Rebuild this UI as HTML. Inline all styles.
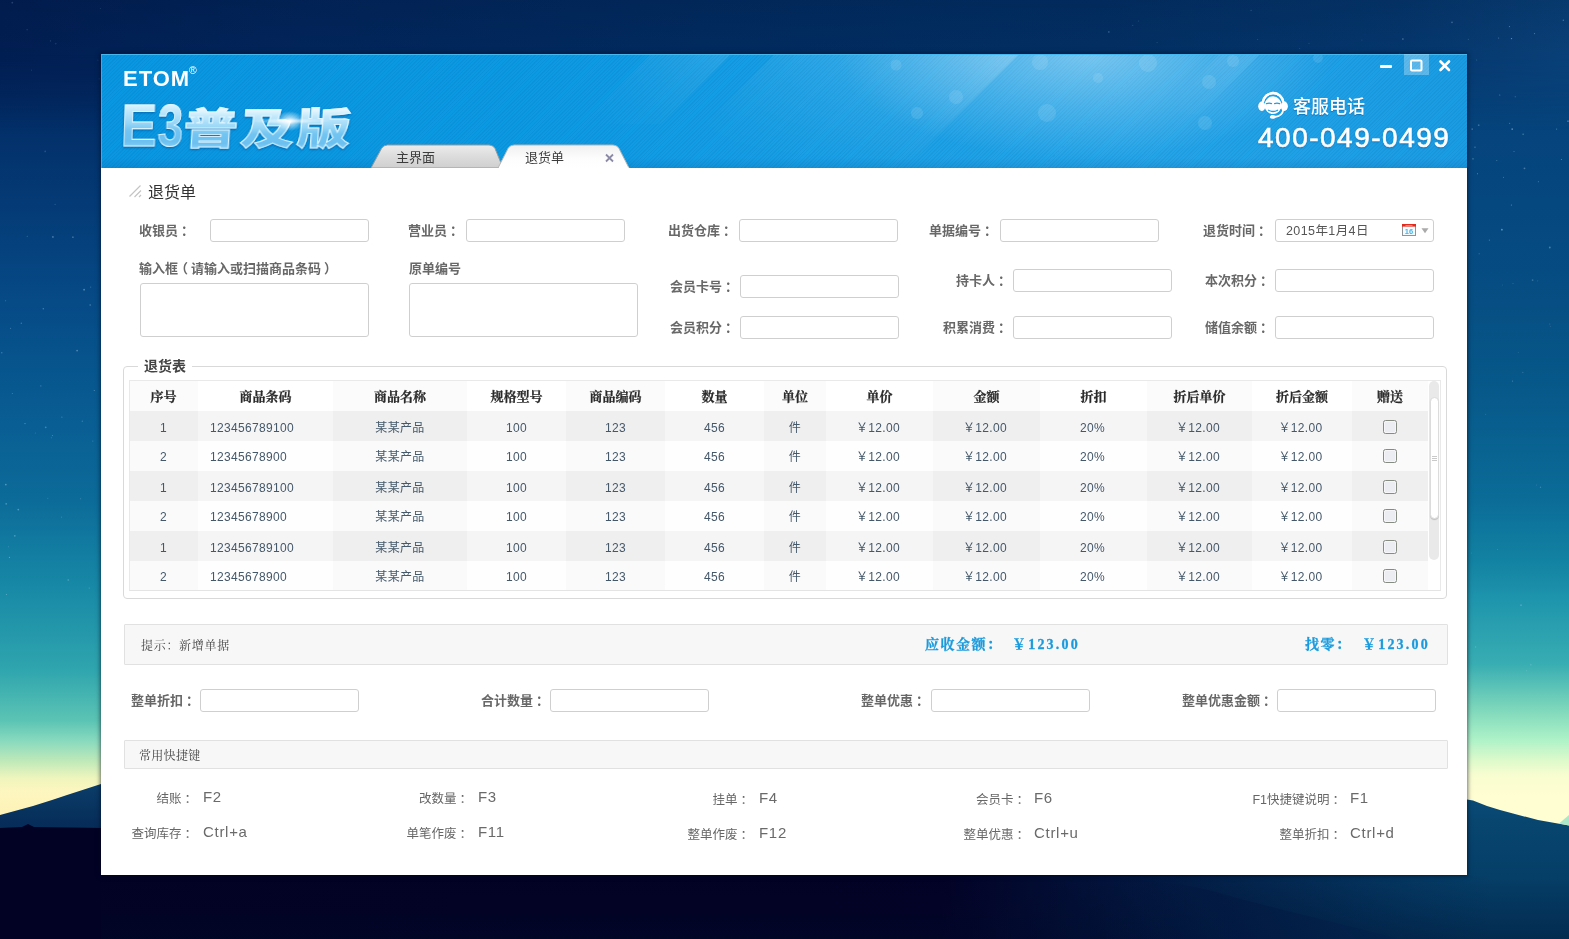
<!DOCTYPE html>
<html lang="zh-CN">
<head>
<meta charset="utf-8">
<title>E3普及版 - 退货单</title>
<style>
*{box-sizing:border-box;margin:0;padding:0}
html,body{width:1569px;height:939px;overflow:hidden}
body{position:relative;font-family:"Liberation Sans","Noto Sans CJK SC",sans-serif;font-size:12.5px;color:#555;
background:#02245a}
.abs{position:absolute}
/* desktop wallpaper */
#bg{position:absolute;left:0;top:0;width:1569px;height:939px;
background:
 linear-gradient(180deg,#011f58 0px,#02275f 70px,#043a75 200px,#064a86 300px,#085a91 400px,#0c6b99 500px,#1788a6 585px,#2fa5ae 670px,#5cc4b4 721px,#86d9be 740px,#b9e8b9 759px,#eef5bd 778px,#fdf6bf 791px,#fdf3b9 810px,#fdf3b9 939px);}
#bgr{position:absolute;left:1200px;top:0;width:369px;height:939px;
-webkit-mask-image:linear-gradient(90deg,rgba(0,0,0,0) 0,rgba(0,0,0,1) 267px);mask-image:linear-gradient(90deg,rgba(0,0,0,0) 0,rgba(0,0,0,1) 267px);
background:linear-gradient(180deg,#094077 0px,#06417a 80px,#05477f 200px,#064e83 300px,#075a8b 400px,#0b6c98 500px,#1282a2 560px,#1f95ad 600px,#38adb2 664px,#7fd8bb 710px,#aef2c8 740px,#dcfacb 760px,#f8fdd0 775px,#fffdd2 795px,#fffdd2 939px);}
#bgt{position:absolute;left:0;top:0;width:1569px;height:130px;-webkit-mask-image:linear-gradient(180deg,#000 0,#000 54px,rgba(0,0,0,0) 130px);mask-image:linear-gradient(180deg,#000 0,#000 54px,rgba(0,0,0,0) 130px);
background:linear-gradient(180deg,rgba(1,10,40,.12) 0,rgba(1,10,40,0) 54px),linear-gradient(90deg,#011e52 0,#01255a 300px,#012b5f 700px,#022f63 1100px,#04366c 1400px,#094077 1569px)}
#bgsvg{position:absolute;left:0;top:0}
/* window */
#win{position:absolute;left:101px;top:54px;width:1366px;height:821px;background:#fff;box-shadow:0 0 4px 1px rgba(0,10,30,.55)}
#hdr{position:absolute;left:0;top:0;width:1366px;height:114px;overflow:hidden;
background:
 linear-gradient(180deg,rgba(0,60,120,0) 0,rgba(0,60,120,0) 104px,rgba(0,60,120,.12) 114px),
 linear-gradient(90deg,#0997e1 0%,#0b99e2 30%,#139de4 45%,#1ca1e6 60%,#24a5e8 75%,#1ea0e6 90%,#1a9ce3 100%);}
#hdr .stripes{position:absolute;left:0;top:0;width:100%;height:100%;
background:repeating-linear-gradient(135deg,rgba(0,50,110,.07) 0,rgba(0,50,110,.07) 1px,rgba(0,50,110,0) 1px,rgba(0,50,110,0) 2.500px)}
#hdr .edge{position:absolute;left:0;top:0;width:100%;height:100%;border-top:1px solid #46b8f0;border-left:1px solid #35acec}
.lbl{position:absolute;font-weight:bold;color:#686868;font-size:13px;line-height:16px;white-space:nowrap;margin-top:0}
.c{position:relative;left:3px}
.inp{position:absolute;border:1px solid #cfcfcf;border-radius:3px;background:#fff;height:23px;width:159px}

/* header content */
#glare{position:absolute;left:0;top:0;width:1366px;height:114px}
#etom{will-change:transform;position:absolute;left:22px;top:13px;font:bold 22px/24px "Liberation Sans",sans-serif;color:#fff;letter-spacing:1px;white-space:nowrap}
#reg{will-change:transform;position:absolute;left:88px;top:11px;font:10.500px/10px "Liberation Sans",sans-serif;color:#fff}
.logo{position:absolute;white-space:nowrap;font-family:"Liberation Sans","Noto Sans CJK SC",sans-serif;transform-origin:0 100%;
 background:linear-gradient(180deg,#e4f6fe 0%,#e4f6fe 12%,#c2e9fb 24%,#97d6f6 45%,#72c4f1 58%,#6cc0f0 76%,#8fd3f6 90%,#c9eefd 100%);-webkit-background-clip:text;background-clip:text;color:transparent;-webkit-text-stroke:1px rgba(226,246,255,.9);
 filter:drop-shadow(0 1px 1px rgba(0,70,140,.55))}
#logoA{left:19px;top:42px;font-weight:bold;font-size:60px;line-height:60px;height:60px;transform:scaleX(.9) skewX(-2deg);letter-spacing:0}
#logoC{left:56px;top:42px;font-weight:bold;font-size:60px;line-height:60px;height:60px;transform:scaleX(.76) skewX(-2deg)}
#logoB{left:80.5px;top:50px;font-weight:900;font-size:42.5px;line-height:52px;height:52px;transform:scaleX(1.27) skewX(-3deg);letter-spacing:2px}
#flare{position:absolute;left:149px;top:47px;width:80px;height:40px;background:radial-gradient(ellipse 14px 10px at 50% 50%,rgba(255,255,255,.95) 0,rgba(255,255,255,.55) 40%,rgba(255,255,255,0) 100%),radial-gradient(ellipse 40px 3px at 50% 50%,rgba(255,255,255,.7) 0,rgba(255,255,255,0) 100%)}
.tab{position:absolute;top:90px;height:24px}
.tabtxt{position:absolute;will-change:transform;top:96px;font-size:13px;line-height:16px;color:#3c3c3c;white-space:nowrap}
#svc{will-change:transform;position:absolute;left:1192px;top:42px;font-size:18px;font-weight:500;line-height:22px;color:#fff;white-space:nowrap;text-shadow:0 1px 1px rgba(0,70,140,.45)}
#tel{will-change:transform;position:absolute;left:1157px;top:67px;font-size:28px;line-height:34px;color:#fff;white-space:nowrap;letter-spacing:1.5px;text-shadow:0 1px 2px rgba(0,60,130,.5);-webkit-text-stroke:.6px #fff}

/* content: coordinates relative to #win (page x-101, y-54) */
#content{position:absolute;left:0;top:0;width:1366px;height:821px;will-change:transform}
#ttl{position:absolute;left:47px;top:129px;font-size:16px;line-height:20px;color:#333;white-space:nowrap}
.lbl.r{text-align:right}
.ta{position:absolute;border:1px solid #cfcfcf;border-radius:3px;background:#fff;width:229px;height:54px}
#fs{position:absolute;left:22px;top:312px;width:1324px;height:233px;border:1px solid #d9d9d9;border-radius:4px}
#fsl{position:absolute;left:37px;top:303px;padding:0 6px;background:#fff;font-size:14px;line-height:18px;font-weight:bold;color:#444;white-space:nowrap}

/* table */
#tb{position:absolute;left:28px;top:326px;width:1312px;height:211px;border:1px solid #e9e9e9;border-bottom-color:#e4e4e4;background:#fff;overflow:hidden}
.tr{position:absolute;left:0;width:1299px;height:30px}
.td{position:absolute;top:0;height:30px;text-align:center;font-size:12px;letter-spacing:.33px;line-height:30px;color:#44586a;white-space:nowrap}
.th{font-family:"Liberation Serif","Noto Serif CJK SC",serif;font-weight:bold;color:#2a2a2a;font-size:13px;letter-spacing:0;-webkit-text-stroke:.25px #2a2a2a}
.cb{position:absolute;width:14px;height:14px;border:1px solid #868c82;border-radius:2.500px;background:#ecedf2;box-shadow:inset 0 0 0 1px #f6f6f9}
#sbt{position:absolute;left:1299px;top:0;width:10px;height:179px;border-radius:5px;background:#e9e9e9}
#sbh{position:absolute;left:1299.500px;top:16px;width:9px;height:122px;border-radius:4.500px;background:#fff;border:1px solid #dcdcdc;box-shadow:0 1px 1px rgba(0,0,0,.18)}

/* bottom */
.bar{position:absolute;left:23px;width:1324px;background:#f7f7f7;border:1px solid #e1e1e1;border-radius:1px}
.sim{font-family:"Liberation Serif","Noto Serif CJK SC",serif}
#hint{position:absolute;left:40px;top:584px;font-size:12px;line-height:16px;color:#444;letter-spacing:.7px;white-space:nowrap}
.amt{position:absolute;top:582px;font-size:14px;line-height:18px;font-weight:bold;color:#1b9bdd;-webkit-text-stroke:.3px #1b9bdd;letter-spacing:1.5px;white-space:nowrap}
#ck{position:absolute;left:38px;top:694px;font-size:12px;line-height:16px;color:#444;letter-spacing:.3px;white-space:nowrap}
.sl{position:absolute;font-size:12.5px;line-height:16px;color:#666;white-space:nowrap;margin-top:2px}
.sk{position:absolute;font-size:15px;line-height:18px;color:#6a6a6a;letter-spacing:.7px;white-space:nowrap;margin-top:1px}
</style>
</head>
<body>
<div id="bg"></div><div id="bgr"></div><div id="bgt"></div>
<svg id="bgsvg" width="1569" height="939" viewBox="0 0 1569 939">
 <defs>
  <linearGradient id="mL" gradientUnits="userSpaceOnUse" x1="0" y1="784" x2="0" y2="830"><stop offset="0" stop-color="#0b3d69"/><stop offset="1" stop-color="#062b57"/></linearGradient>
  <linearGradient id="mR" gradientUnits="userSpaceOnUse" x1="0" y1="799" x2="0" y2="876"><stop offset="0" stop-color="#0a4b75"/><stop offset=".4" stop-color="#07446e"/><stop offset="1" stop-color="#053f68"/></linearGradient>
  <linearGradient id="bot2" gradientUnits="userSpaceOnUse" x1="0" y1="0" x2="1569" y2="0"><stop offset="0" stop-color="#020224"/><stop offset=".6" stop-color="#020226"/><stop offset=".7" stop-color="#02123a"/><stop offset=".8" stop-color="#03264f"/><stop offset=".9" stop-color="#043862"/><stop offset=".95" stop-color="#053f68"/><stop offset="1" stop-color="#053f68"/></linearGradient>
  <linearGradient id="botv" x1="0" y1="0" x2="0" y2="1"><stop offset="0" stop-color="#010a28" stop-opacity="0"/><stop offset="1" stop-color="#010a28" stop-opacity=".38"/></linearGradient>
  <linearGradient id="ridge" gradientUnits="userSpaceOnUse" x1="1100" y1="0" x2="1450" y2="0"><stop offset="0" stop-color="#02123a" stop-opacity="0"/><stop offset=".4" stop-color="#021a42" stop-opacity=".75"/><stop offset="1" stop-color="#032650" stop-opacity=".8"/></linearGradient>
 </defs>
 <g fill="#bfe6ff"><circle cx="1468.3" cy="39.2" r="0.5" opacity="0.27"/><circle cx="1499.8" cy="95.1" r="0.5" opacity="0.48"/><circle cx="1452.0" cy="22.3" r="0.9" opacity="0.27"/><circle cx="1433.5" cy="110.4" r="0.5" opacity="0.49"/><circle cx="1514.0" cy="151.6" r="0.5" opacity="0.39"/><circle cx="1479.1" cy="253.8" r="0.5" opacity="0.39"/><circle cx="1439.8" cy="109.0" r="0.5" opacity="0.39"/><circle cx="1503.5" cy="177.3" r="0.5" opacity="0.4"/><circle cx="1515.2" cy="96.8" r="0.5" opacity="0.39"/><circle cx="1512.2" cy="129.1" r="0.9" opacity="0.44"/><circle cx="1489.4" cy="240.1" r="0.7" opacity="0.32"/><circle cx="1538.4" cy="181.7" r="0.6" opacity="0.27"/><circle cx="1464.7" cy="128.7" r="0.7" opacity="0.43"/><circle cx="1462.9" cy="254.8" r="0.5" opacity="0.38"/><circle cx="1444.6" cy="88.9" r="0.9" opacity="0.36"/><circle cx="1563.3" cy="20.2" r="0.7" opacity="0.34"/><circle cx="1472.2" cy="129.1" r="0.9" opacity="0.27"/><circle cx="1433.9" cy="70.2" r="0.5" opacity="0.27"/><circle cx="1524.5" cy="168.3" r="0.9" opacity="0.32"/><circle cx="1477.5" cy="173.8" r="0.5" opacity="0.49"/><circle cx="1473.0" cy="158.8" r="0.9" opacity="0.26"/><circle cx="1534.5" cy="33.6" r="0.6" opacity="0.35"/><circle cx="1556.6" cy="129.1" r="0.6" opacity="0.36"/><circle cx="1501.9" cy="229.7" r="0.9" opacity="0.47"/><circle cx="1461.5" cy="108.0" r="0.7" opacity="0.42"/><circle cx="1476.7" cy="60.0" r="0.5" opacity="0.29"/><circle cx="1454.6" cy="60.7" r="0.9" opacity="0.46"/><circle cx="1447.2" cy="73.3" r="0.6" opacity="0.35"/><circle cx="1475.0" cy="147.2" r="0.6" opacity="0.42"/><circle cx="1496.8" cy="160.6" r="0.5" opacity="0.36"/><circle cx="1549.8" cy="247.5" r="0.9" opacity="0.35"/><circle cx="1478.7" cy="125.2" r="0.9" opacity="0.27"/><circle cx="1430.0" cy="54.3" r="0.6" opacity="0.28"/><circle cx="1509.5" cy="26.6" r="0.6" opacity="0.38"/><circle cx="1561.4" cy="159.6" r="0.5" opacity="0.47"/><circle cx="1511.5" cy="38.6" r="0.7" opacity="0.49"/><circle cx="1509.7" cy="123.3" r="0.5" opacity="0.46"/><circle cx="1568.0" cy="121.2" r="0.9" opacity="0.33"/><circle cx="1441.5" cy="194.9" r="0.7" opacity="0.37"/><circle cx="1523.1" cy="134.2" r="0.6" opacity="0.49"/><circle cx="1498.7" cy="38.1" r="0.5" opacity="0.44"/><circle cx="1464.4" cy="167.2" r="0.5" opacity="0.42"/><circle cx="1458.9" cy="95.3" r="0.6" opacity="0.34"/><circle cx="1453.2" cy="140.8" r="0.7" opacity="0.41"/><circle cx="1511.4" cy="205.0" r="0.6" opacity="0.45"/><circle cx="1361.9" cy="40.0" r="0.6" opacity="0.15"/><circle cx="1257.7" cy="39.5" r="0.5" opacity="0.22"/><circle cx="1251.1" cy="10.5" r="0.7" opacity="0.18"/><circle cx="1399.8" cy="53.4" r="0.7" opacity="0.14"/><circle cx="1132.7" cy="25.4" r="0.7" opacity="0.15"/><circle cx="1299.7" cy="48.6" r="0.5" opacity="0.18"/><circle cx="1309.0" cy="43.2" r="0.5" opacity="0.23"/><circle cx="1138.4" cy="21.0" r="0.6" opacity="0.18"/><circle cx="1157.1" cy="42.6" r="0.7" opacity="0.14"/><circle cx="1402.8" cy="39.0" r="0.9" opacity="0.18"/><circle cx="1403.0" cy="39.1" r="0.6" opacity="0.25"/><circle cx="1108.8" cy="31.9" r="0.9" opacity="0.23"/><circle cx="14.8" cy="535.8" r="0.9" opacity="0.33"/><circle cx="35.4" cy="433.0" r="0.6" opacity="0.2"/><circle cx="80.7" cy="498.8" r="0.5" opacity="0.31"/><circle cx="94.3" cy="390.5" r="0.6" opacity="0.37"/><circle cx="21.3" cy="323.2" r="0.7" opacity="0.3"/><circle cx="77.1" cy="350.6" r="0.9" opacity="0.37"/><circle cx="6.2" cy="503.8" r="0.9" opacity="0.33"/><circle cx="82.3" cy="421.2" r="0.6" opacity="0.31"/><circle cx="52.9" cy="236.9" r="0.9" opacity="0.36"/><circle cx="61.5" cy="517.1" r="0.6" opacity="0.23"/><circle cx="47.8" cy="498.3" r="0.5" opacity="0.27"/><circle cx="52.4" cy="435.5" r="0.5" opacity="0.38"/><circle cx="5.7" cy="300.8" r="0.5" opacity="0.35"/><circle cx="51.3" cy="437.8" r="0.5" opacity="0.29"/><circle cx="61.9" cy="417.1" r="0.6" opacity="0.34"/><circle cx="45.7" cy="427.3" r="0.9" opacity="0.3"/><circle cx="25.0" cy="423.6" r="0.7" opacity="0.38"/><circle cx="90.2" cy="305.0" r="0.9" opacity="0.23"/><circle cx="12.3" cy="393.6" r="0.5" opacity="0.33"/><circle cx="43.3" cy="308.7" r="0.7" opacity="0.36"/><circle cx="90.6" cy="287.1" r="0.7" opacity="0.23"/><circle cx="89.2" cy="588.0" r="0.6" opacity="0.35"/><circle cx="9.5" cy="557.4" r="0.6" opacity="0.4"/><circle cx="84.1" cy="289.7" r="0.9" opacity="0.4"/><circle cx="40.8" cy="385.9" r="0.7" opacity="0.26"/><circle cx="72.9" cy="237.2" r="0.9" opacity="0.29"/><circle cx="1.8" cy="352.7" r="0.7" opacity="0.3"/><circle cx="6.5" cy="594.5" r="0.6" opacity="0.39"/><circle cx="10.6" cy="328.3" r="0.5" opacity="0.38"/><circle cx="18.3" cy="509.6" r="0.9" opacity="0.37"/><circle cx="68.3" cy="580.0" r="0.9" opacity="0.23"/><circle cx="92.8" cy="441.1" r="0.7" opacity="0.22"/><circle cx="5.8" cy="484.6" r="0.9" opacity="0.38"/><circle cx="27.2" cy="236.2" r="0.5" opacity="0.36"/><circle cx="8.5" cy="546.8" r="0.5" opacity="0.25"/><circle cx="12.3" cy="2.7" r="0.9" opacity="0.19"/><circle cx="27.1" cy="29.7" r="0.6" opacity="0.19"/><circle cx="97.9" cy="60.2" r="0.6" opacity="0.12"/><circle cx="31.5" cy="70.2" r="0.6" opacity="0.13"/><circle cx="50.5" cy="40.9" r="0.7" opacity="0.18"/><circle cx="100.4" cy="8.5" r="0.5" opacity="0.17"/><circle cx="55.7" cy="43.6" r="0.9" opacity="0.12"/><circle cx="45.2" cy="151.4" r="0.9" opacity="0.17"/><circle cx="55.1" cy="204.4" r="0.7" opacity="0.17"/><circle cx="99.2" cy="78.8" r="0.6" opacity="0.14"/><circle cx="1502.5" cy="285.0" r="0.6" opacity="0.15"/><circle cx="1530.8" cy="664.7" r="0.9" opacity="0.17"/><circle cx="1475.6" cy="647.0" r="0.7" opacity="0.24"/><circle cx="1537.7" cy="280.8" r="0.6" opacity="0.17"/><circle cx="1512.5" cy="381.1" r="0.7" opacity="0.3"/><circle cx="1522.8" cy="372.4" r="0.7" opacity="0.18"/><circle cx="1485.7" cy="414.3" r="0.5" opacity="0.22"/><circle cx="1518.3" cy="352.5" r="0.5" opacity="0.16"/><circle cx="1550.3" cy="326.2" r="0.5" opacity="0.21"/><circle cx="1497.6" cy="549.6" r="0.5" opacity="0.24"/><circle cx="1521.0" cy="605.2" r="0.9" opacity="0.26"/><circle cx="1540.5" cy="487.3" r="0.7" opacity="0.26"/><circle cx="1532.6" cy="280.1" r="0.9" opacity="0.26"/><circle cx="1549.8" cy="324.1" r="0.5" opacity="0.27"/><circle cx="1526.6" cy="670.7" r="0.6" opacity="0.16"/><circle cx="1471.3" cy="553.1" r="0.5" opacity="0.21"/><circle cx="1513.0" cy="283.4" r="0.5" opacity="0.24"/><circle cx="1536.4" cy="485.1" r="0.5" opacity="0.22"/></g>
 <path d="M0,815 L33,806 L52,800 L67,795 L101,784 L101,840 L0,840 Z" fill="url(#mL)"/>
 <path d="M0,828 L22,827 L28,824 L34,827 L101,828 L101,939 L0,939 Z" fill="#020224"/>
 <path d="M1467,799.500 L1473,800.500 L1487,806 L1500,810 L1513,813.500 L1538,820 L1569,825.500 L1569,939 L1467,939 Z" fill="url(#mR)"/>
 <path d="M1559,823.500 L1569,815 L1569,825.500 Z" fill="#9fe3c8" opacity=".85"/>
 <rect x="101" y="860" width="1366" height="20" fill="url(#bot2)"/>
 <rect x="101" y="875" width="1468" height="64" fill="url(#bot2)"/>
 <rect x="101" y="875" width="1468" height="64" fill="url(#botv)"/>
 <path d="M1100,878 C1160,880 1200,886 1230,896 C1300,915 1360,928 1399,939 L1100,939 Z" fill="url(#ridge)"/>
</svg>

<div id="win">
 <div id="hdr">
  <div class="stripes"></div>
  <svg id="glare" viewBox="0 0 1366 114">
   <defs>
    <radialGradient id="gl0" gradientUnits="userSpaceOnUse" cx="985" cy="0" r="250" gradientTransform="translate(985 0) scale(1 .42) translate(-985 0)"><stop offset="0" stop-color="#fff" stop-opacity=".38"/><stop offset=".5" stop-color="#fff" stop-opacity=".18"/><stop offset="1" stop-color="#fff" stop-opacity="0"/></radialGradient>
    <linearGradient id="gl1" x1="0" y1="0" x2="1" y2="0"><stop offset="0" stop-color="#fff" stop-opacity="0"/><stop offset="1" stop-color="#fff" stop-opacity=".2"/></linearGradient>
    <linearGradient id="gl2" x1="0" y1="0" x2="1" y2="0"><stop offset="0" stop-color="#fff" stop-opacity="0"/><stop offset="1" stop-color="#fff" stop-opacity=".1"/></linearGradient>
    <linearGradient id="gl3" x1="0" y1="0" x2="0" y2="1"><stop offset="0" stop-color="#fff" stop-opacity="1"/><stop offset="1" stop-color="#fff" stop-opacity="0"/></linearGradient>
    <mask id="glm"><rect x="0" y="0" width="1366" height="114" fill="url(#gl3)"/></mask>
   </defs>
   <rect x="600" y="0" width="766" height="114" fill="url(#gl0)"/>
   <g mask="url(#glm)">
    <polygon points="918,0 804,114 560,114 674,0" fill="url(#gl1)"/>
    <polygon points="630,0 560,70 480,70 550,0" fill="url(#gl2)"/>
    <polygon points="1159,0 1100,60 1060,60 1119,0" fill="url(#gl2)"/>
   </g>
   <g fill="#fff" opacity=".1"><circle cx="795" cy="11" r="5.5"/><circle cx="855" cy="43" r="7"/><circle cx="816" cy="59" r="6"/><circle cx="939" cy="8" r="8"/><circle cx="946" cy="59" r="9"/><circle cx="1047" cy="9" r="9"/><circle cx="1108" cy="28" r="7"/><circle cx="1132" cy="7" r="6"/><circle cx="1104" cy="69" r="7"/><circle cx="997" cy="24" r="5"/><circle cx="1217" cy="4" r="5"/></g>
  </svg>
  <div class="edge"></div>
  <div id="etom">ETOM</div><div id="reg">®</div>
  <div id="logoA" class="logo">E</div><div id="logoC" class="logo">3</div><div id="logoB" class="logo">普及版</div><div id="flare"></div>
  <svg class="tab" style="left:268px;width:262px" viewBox="0 0 262 24">
   <defs>
    <linearGradient id="tg1" x1="0" y1="0" x2="0" y2="1"><stop offset="0" stop-color="#ececec"/><stop offset=".5" stop-color="#dcdcdc"/><stop offset="1" stop-color="#cfcfcf"/></linearGradient>
    <linearGradient id="tg2" x1="0" y1="0" x2="0" y2="1"><stop offset="0" stop-color="#f0f0f0"/><stop offset=".6" stop-color="#fdfdfd"/><stop offset="1" stop-color="#ffffff"/></linearGradient>
   </defs>
   <path d="M2,24 L12.500,4.500 Q14.500,1 18.500,1 L120,1 Q124,1 126,4.500 L134,24 Z" fill="url(#tg1)" stroke="#9a9a9a" stroke-width="1"/>
   <path d="M129,24 L139,4.500 Q141,1 145,1 L244,1 Q248,1 250,4.500 L260,24 Z" fill="url(#tg2)" stroke="#b5b5b5" stroke-width="1"/>
   <rect x="130" y="23" width="129.500" height="1.500" fill="#fff"/>
   <path d="M237,10.500 L244,17.500 M244,10.500 L237,17.500" stroke="#8a8aa6" stroke-width="1.800" fill="none"/>
  </svg>
  <div class="tabtxt" style="left:295px">主界面</div>
  <div class="tabtxt" style="left:424px">退货单</div>
  <svg class="abs" style="left:1275px;top:0;width:91px;height:24px" viewBox="0 0 91 24">
   <rect x="28" y="0" width="25" height="21" fill="#fff" opacity=".28"/>
   <rect x="4" y="11" width="12" height="3" rx="1" fill="#fff"/>
   <rect x="35" y="6.500" width="10.500" height="10" rx="1" fill="none" stroke="#fff" stroke-width="2"/>
   <path d="M64.500,7.500 L73,16 M73,7.500 L64.500,16" stroke="#fff" stroke-width="2.600" stroke-linecap="round" fill="none"/>
  </svg>
  <svg class="abs" style="left:1155px;top:36px;width:34px;height:30px" viewBox="0 0 34 30">
   <path d="M6.900,12.200 A10.300,10.600 0 0 1 27.300,12.200" fill="none" stroke="#fff" stroke-width="2.400"/>
   <ellipse cx="5.700" cy="16.300" rx="3.500" ry="4.700" fill="#fff"/>
   <ellipse cx="28.400" cy="16.300" rx="3.500" ry="4.700" fill="#fff"/>
   <ellipse cx="17.050" cy="15.300" rx="9.900" ry="10.300" fill="#1c9ee5"/>
   <path d="M6.900,12.200 A10.300,10.600 0 0 1 27.300,12.200" fill="none" stroke="#fff" stroke-width="2.400"/>
   <path d="M27.300,19.500 Q26.500,25.800 19.500,26.800" fill="none" stroke="#fff" stroke-width="1.900" stroke-linecap="round"/>
   <ellipse cx="17.050" cy="15.200" rx="8.500" ry="8.900" fill="#fff"/>
   <path d="M25.300,19.300 Q23.800,23.600 19.800,24.700" fill="none" stroke="#1c9ee5" stroke-width="1.500"/>
   <ellipse cx="6.200" cy="16.300" rx="3" ry="4.300" fill="#fff"/>
   <ellipse cx="27.900" cy="16.300" rx="3" ry="4.300" fill="#fff"/>
   <ellipse cx="16.700" cy="26.900" rx="2.900" ry="1.800" fill="#fff"/>
   <g fill="none" stroke="#1c9ee5" stroke-width="1.250" stroke-linecap="round">
    <path d="M10.500,13.700 Q13,12.700 15.500,13.600"/><path d="M18.600,13.600 Q21.100,12.700 23.600,13.700"/>
    <path d="M12.500,20.200 Q17.050,22.800 21.600,20.200"/>
   </g>
  </svg>
  <div id="svc">客服电话</div>
  <div id="tel">400-049-0499</div>
 </div>
 <div id="content">
  <svg class="abs" style="left:28px;top:131px;width:13px;height:13px" viewBox="0 0 13 13"><path d="M0.500,11.500 L11.500,0.500 M5.500,12 L12,5.500 M10,12 L12,10" stroke="#c4c4c4" stroke-width="1.200" fill="none"/></svg>
  <div id="ttl">退货单</div>
  <div class="lbl" style="left:38.0px;top:169.0px">收银员<span class="c">：</span></div>
  <div class="inp" style="left:109px;top:165px;width:159px;height:23px"></div>
  <div class="lbl" style="left:307.0px;top:169.0px">营业员<span class="c">：</span></div>
  <div class="inp" style="left:365px;top:165px;width:159px;height:23px"></div>
  <div class="lbl" style="left:567.0px;top:169.0px">出货仓库<span class="c">：</span></div>
  <div class="inp" style="left:638px;top:165px;width:159px;height:23px"></div>
  <div class="lbl" style="left:828.0px;top:169.0px">单据编号<span class="c">：</span></div>
  <div class="inp" style="left:899px;top:165px;width:159px;height:23px"></div>
  <div class="lbl" style="left:1102.0px;top:169.0px">退货时间<span class="c">：</span></div>
  <div class="inp" style="left:1174px;top:165px;width:159px;height:23px"></div>
  <div class="abs" style="left:1185px;top:169px;font-size:12.5px;line-height:16px;color:#555;white-space:nowrap;letter-spacing:.4px">2015年1月4日</div>
  <svg class="abs" style="left:1301px;top:170px;width:27px;height:12px" viewBox="0 0 27 12">
<rect x="0.500" y="0.500" width="13" height="11" fill="#f3fbff" stroke="#8f9498" stroke-width="1"/>
<rect x="0" y="0" width="14" height="2.600" fill="#e3281c"/>
<rect x="3.500" y="1" width="7" height=".8" fill="#f59a92"/>
<text x="7" y="9.800" font-family="Liberation Sans, sans-serif" font-size="7.500" font-weight="bold" fill="#49b6ec" text-anchor="middle">16</text>
<path d="M19.500,4.200 L26.500,4.200 L23,9.200 Z" fill="#aaaaaa"/></svg>
  <div class="lbl" style="left:38.0px;top:207.0px">输入框<span style="position:relative;left:-3px">（</span>请输入或扫描商品条码<span style="position:relative;left:3px">）</span></div>
  <div class="ta" style="left:39px;top:229px"></div>
  <div class="lbl" style="left:308.0px;top:207.0px">原单编号</div>
  <div class="ta" style="left:308px;top:229px"></div>
  <div class="lbl" style="left:569.0px;top:225.0px">会员卡号<span class="c">：</span></div>
  <div class="inp" style="left:639px;top:221px;width:159px;height:23px"></div>
  <div class="lbl" style="left:569.0px;top:266.0px">会员积分<span class="c">：</span></div>
  <div class="inp" style="left:639px;top:262px;width:159px;height:23px"></div>
  <div class="lbl" style="right:459.0px;top:219.0px">持卡人<span class="c">：</span></div>
  <div class="inp" style="left:912px;top:215px;width:159px;height:23px"></div>
  <div class="lbl" style="right:459.0px;top:266.0px">积累消费<span class="c">：</span></div>
  <div class="inp" style="left:912px;top:262px;width:159px;height:23px"></div>
  <div class="lbl" style="left:1104.0px;top:219.0px">本次积分<span class="c">：</span></div>
  <div class="inp" style="left:1174px;top:215px;width:159px;height:23px"></div>
  <div class="lbl" style="left:1104.0px;top:266.0px">储值余额<span class="c">：</span></div>
  <div class="inp" style="left:1174px;top:262px;width:159px;height:23px"></div>
  <div id="fs"></div><div id="fsl">退货表</div>
  <div id="tb">
  <div class="tr" style="top:0px"><div class="td th" style="left:-1px;width:69px;background:#fbfbfb;line-height:32px">序号</div><div class="td th" style="left:68px;width:135px;background:#ffffff;line-height:32px">商品条码</div><div class="td th" style="left:203px;width:134px;background:#fbfbfb;line-height:32px">商品名称</div><div class="td th" style="left:337px;width:99px;background:#ffffff;line-height:32px">规格型号</div><div class="td th" style="left:436px;width:99px;background:#fbfbfb;line-height:32px">商品编码</div><div class="td th" style="left:535px;width:99px;background:#ffffff;line-height:32px">数量</div><div class="td th" style="left:634px;width:62px;background:#fbfbfb;line-height:32px">单位</div><div class="td th" style="left:696px;width:107px;background:#ffffff;line-height:32px">单价</div><div class="td th" style="left:803px;width:107px;background:#fbfbfb;line-height:32px">金额</div><div class="td th" style="left:910px;width:107px;background:#ffffff;line-height:32px">折扣</div><div class="td th" style="left:1017px;width:105px;background:#fbfbfb;line-height:32px">折后单价</div><div class="td th" style="left:1122px;width:100px;background:#ffffff;line-height:32px">折后金额</div><div class="td th" style="left:1222px;width:76px;background:#fbfbfb;line-height:32px">赠送</div></div>
  <div class="tr" style="top:30px"><div class="td" style="left:-1px;width:69px;background:#efefef;line-height:35px">1</div><div class="td" style="left:68px;width:135px;background:#f5f5f5;text-align:left;padding-left:12px;line-height:35px">123456789100</div><div class="td" style="left:203px;width:134px;background:#efefef;line-height:35px">某某产品</div><div class="td" style="left:337px;width:99px;background:#f5f5f5;line-height:35px">100</div><div class="td" style="left:436px;width:99px;background:#efefef;line-height:35px">123</div><div class="td" style="left:535px;width:99px;background:#f5f5f5;line-height:35px">456</div><div class="td" style="left:634px;width:62px;background:#efefef;line-height:35px">件</div><div class="td" style="left:696px;width:107px;background:#f5f5f5;line-height:35px;padding-right:3px">￥12.00</div><div class="td" style="left:803px;width:107px;background:#efefef;line-height:35px;padding-right:3px">￥12.00</div><div class="td" style="left:910px;width:107px;background:#f5f5f5;line-height:35px;padding-right:2px">20%</div><div class="td" style="left:1017px;width:105px;background:#efefef;line-height:35px;padding-right:3px">￥12.00</div><div class="td" style="left:1122px;width:100px;background:#f5f5f5;line-height:35px;padding-right:3px">￥12.00</div><div class="td" style="left:1222px;width:76px;background:#efefef;line-height:35px"><span class="cb" style="left:31px;top:9px"></span></div></div>
  <div class="tr" style="top:60px"><div class="td" style="left:-1px;width:69px;background:#fafafa;line-height:33px">2</div><div class="td" style="left:68px;width:135px;background:#fefefe;text-align:left;padding-left:12px;line-height:33px">12345678900</div><div class="td" style="left:203px;width:134px;background:#fafafa;line-height:33px">某某产品</div><div class="td" style="left:337px;width:99px;background:#fefefe;line-height:33px">100</div><div class="td" style="left:436px;width:99px;background:#fafafa;line-height:33px">123</div><div class="td" style="left:535px;width:99px;background:#fefefe;line-height:33px">456</div><div class="td" style="left:634px;width:62px;background:#fafafa;line-height:33px">件</div><div class="td" style="left:696px;width:107px;background:#fefefe;line-height:33px;padding-right:3px">￥12.00</div><div class="td" style="left:803px;width:107px;background:#fafafa;line-height:33px;padding-right:3px">￥12.00</div><div class="td" style="left:910px;width:107px;background:#fefefe;line-height:33px;padding-right:2px">20%</div><div class="td" style="left:1017px;width:105px;background:#fafafa;line-height:33px;padding-right:3px">￥12.00</div><div class="td" style="left:1122px;width:100px;background:#fefefe;line-height:33px;padding-right:3px">￥12.00</div><div class="td" style="left:1222px;width:76px;background:#fafafa;line-height:33px"><span class="cb" style="left:31px;top:8px"></span></div></div>
  <div class="tr" style="top:90px"><div class="td" style="left:-1px;width:69px;background:#efefef;line-height:35px">1</div><div class="td" style="left:68px;width:135px;background:#f5f5f5;text-align:left;padding-left:12px;line-height:35px">123456789100</div><div class="td" style="left:203px;width:134px;background:#efefef;line-height:35px">某某产品</div><div class="td" style="left:337px;width:99px;background:#f5f5f5;line-height:35px">100</div><div class="td" style="left:436px;width:99px;background:#efefef;line-height:35px">123</div><div class="td" style="left:535px;width:99px;background:#f5f5f5;line-height:35px">456</div><div class="td" style="left:634px;width:62px;background:#efefef;line-height:35px">件</div><div class="td" style="left:696px;width:107px;background:#f5f5f5;line-height:35px;padding-right:3px">￥12.00</div><div class="td" style="left:803px;width:107px;background:#efefef;line-height:35px;padding-right:3px">￥12.00</div><div class="td" style="left:910px;width:107px;background:#f5f5f5;line-height:35px;padding-right:2px">20%</div><div class="td" style="left:1017px;width:105px;background:#efefef;line-height:35px;padding-right:3px">￥12.00</div><div class="td" style="left:1122px;width:100px;background:#f5f5f5;line-height:35px;padding-right:3px">￥12.00</div><div class="td" style="left:1222px;width:76px;background:#efefef;line-height:35px"><span class="cb" style="left:31px;top:9px"></span></div></div>
  <div class="tr" style="top:120px"><div class="td" style="left:-1px;width:69px;background:#fafafa;line-height:33px">2</div><div class="td" style="left:68px;width:135px;background:#fefefe;text-align:left;padding-left:12px;line-height:33px">12345678900</div><div class="td" style="left:203px;width:134px;background:#fafafa;line-height:33px">某某产品</div><div class="td" style="left:337px;width:99px;background:#fefefe;line-height:33px">100</div><div class="td" style="left:436px;width:99px;background:#fafafa;line-height:33px">123</div><div class="td" style="left:535px;width:99px;background:#fefefe;line-height:33px">456</div><div class="td" style="left:634px;width:62px;background:#fafafa;line-height:33px">件</div><div class="td" style="left:696px;width:107px;background:#fefefe;line-height:33px;padding-right:3px">￥12.00</div><div class="td" style="left:803px;width:107px;background:#fafafa;line-height:33px;padding-right:3px">￥12.00</div><div class="td" style="left:910px;width:107px;background:#fefefe;line-height:33px;padding-right:2px">20%</div><div class="td" style="left:1017px;width:105px;background:#fafafa;line-height:33px;padding-right:3px">￥12.00</div><div class="td" style="left:1122px;width:100px;background:#fefefe;line-height:33px;padding-right:3px">￥12.00</div><div class="td" style="left:1222px;width:76px;background:#fafafa;line-height:33px"><span class="cb" style="left:31px;top:8px"></span></div></div>
  <div class="tr" style="top:150px"><div class="td" style="left:-1px;width:69px;background:#efefef;line-height:35px">1</div><div class="td" style="left:68px;width:135px;background:#f5f5f5;text-align:left;padding-left:12px;line-height:35px">123456789100</div><div class="td" style="left:203px;width:134px;background:#efefef;line-height:35px">某某产品</div><div class="td" style="left:337px;width:99px;background:#f5f5f5;line-height:35px">100</div><div class="td" style="left:436px;width:99px;background:#efefef;line-height:35px">123</div><div class="td" style="left:535px;width:99px;background:#f5f5f5;line-height:35px">456</div><div class="td" style="left:634px;width:62px;background:#efefef;line-height:35px">件</div><div class="td" style="left:696px;width:107px;background:#f5f5f5;line-height:35px;padding-right:3px">￥12.00</div><div class="td" style="left:803px;width:107px;background:#efefef;line-height:35px;padding-right:3px">￥12.00</div><div class="td" style="left:910px;width:107px;background:#f5f5f5;line-height:35px;padding-right:2px">20%</div><div class="td" style="left:1017px;width:105px;background:#efefef;line-height:35px;padding-right:3px">￥12.00</div><div class="td" style="left:1122px;width:100px;background:#f5f5f5;line-height:35px;padding-right:3px">￥12.00</div><div class="td" style="left:1222px;width:76px;background:#efefef;line-height:35px"><span class="cb" style="left:31px;top:9px"></span></div></div>
  <div class="tr" style="top:180px"><div class="td" style="left:-1px;width:69px;background:#fafafa;line-height:33px">2</div><div class="td" style="left:68px;width:135px;background:#fefefe;text-align:left;padding-left:12px;line-height:33px">12345678900</div><div class="td" style="left:203px;width:134px;background:#fafafa;line-height:33px">某某产品</div><div class="td" style="left:337px;width:99px;background:#fefefe;line-height:33px">100</div><div class="td" style="left:436px;width:99px;background:#fafafa;line-height:33px">123</div><div class="td" style="left:535px;width:99px;background:#fefefe;line-height:33px">456</div><div class="td" style="left:634px;width:62px;background:#fafafa;line-height:33px">件</div><div class="td" style="left:696px;width:107px;background:#fefefe;line-height:33px;padding-right:3px">￥12.00</div><div class="td" style="left:803px;width:107px;background:#fafafa;line-height:33px;padding-right:3px">￥12.00</div><div class="td" style="left:910px;width:107px;background:#fefefe;line-height:33px;padding-right:2px">20%</div><div class="td" style="left:1017px;width:105px;background:#fafafa;line-height:33px;padding-right:3px">￥12.00</div><div class="td" style="left:1122px;width:100px;background:#fefefe;line-height:33px;padding-right:3px">￥12.00</div><div class="td" style="left:1222px;width:76px;background:#fafafa;line-height:33px"><span class="cb" style="left:31px;top:8px"></span></div></div>
  <div id="sbt"></div><div id="sbh"></div>
  <svg class="abs" style="left:1302px;top:74px;width:5px;height:7px" viewBox="0 0 5 7"><path d="M0,1.500 H5 M0,3.500 H5 M0,5.500 H5" stroke="#c9c9c9" stroke-width="1"/></svg>
  </div>
  <div class="bar" style="top:570px;height:41px"></div>
  <div id="hint" class="sim">提示：新增单据</div>
  <div class="amt sim" style="left:824px">应收金额：</div><div class="amt sim" style="left:911px;letter-spacing:2.2px">￥123.00</div>
  <div class="amt sim" style="left:1204px">找零：</div><div class="amt sim" style="left:1261px;letter-spacing:2.2px">￥123.00</div>
  <div class="lbl" style="right:1271px;top:639px">整单折扣<span class="c">：</span></div>
  <div class="inp" style="left:99px;top:635px;width:159px;height:23px"></div>
  <div class="lbl" style="right:921px;top:639px">合计数量<span class="c">：</span></div>
  <div class="inp" style="left:449px;top:635px;width:159px;height:23px"></div>
  <div class="lbl" style="right:541px;top:639px">整单优惠<span class="c">：</span></div>
  <div class="inp" style="left:830px;top:635px;width:159px;height:23px"></div>
  <div class="lbl" style="right:194px;top:639px">整单优惠金额<span class="c">：</span></div>
  <div class="inp" style="left:1176px;top:635px;width:159px;height:23px"></div>
  <div class="bar" style="top:686px;height:29px"></div>
  <div id="ck" class="sim">常用快捷键</div>
  <div class="sl" style="right:1273.0px;top:735px">结账<span class="c">：</span></div><div class="sk" style="left:102px;top:733px">F2</div>
  <div class="sl" style="right:1273.0px;top:770px">查询库存<span class="c">：</span></div><div class="sk" style="left:102px;top:768px">Ctrl+a</div>
  <div class="sl" style="right:998.0px;top:735px">改数量<span class="c">：</span></div><div class="sk" style="left:377px;top:733px">F3</div>
  <div class="sl" style="right:998.0px;top:770px">单笔作废<span class="c">：</span></div><div class="sk" style="left:377px;top:768px">F11</div>
  <div class="sl" style="right:717.0px;top:736px">挂单<span class="c">：</span></div><div class="sk" style="left:658px;top:734px">F4</div>
  <div class="sl" style="right:717.0px;top:771px">整单作废<span class="c">：</span></div><div class="sk" style="left:658px;top:769px">F12</div>
  <div class="sl" style="right:441.0px;top:736px">会员卡<span class="c">：</span></div><div class="sk" style="left:933px;top:734px">F6</div>
  <div class="sl" style="right:441.0px;top:771px">整单优惠<span class="c">：</span></div><div class="sk" style="left:933px;top:769px">Ctrl+u</div>
  <div class="sl" style="right:125.0px;top:736px">F1快捷键说明<span class="c">：</span></div><div class="sk" style="left:1249px;top:734px">F1</div>
  <div class="sl" style="right:125.0px;top:771px">整单折扣<span class="c">：</span></div><div class="sk" style="left:1249px;top:769px">Ctrl+d</div>
 </div>
</div>
</body>
</html>
